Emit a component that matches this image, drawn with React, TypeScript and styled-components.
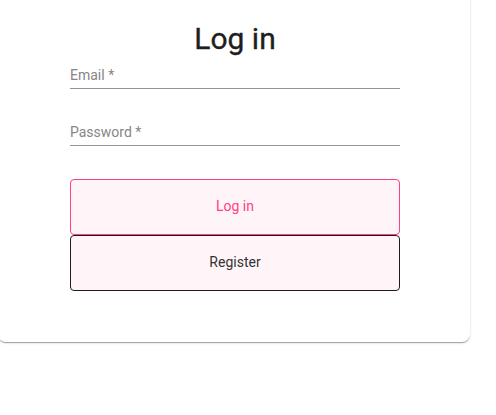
import React from "react";
import styled, { createGlobalStyle } from "styled-components";

const Global = createGlobalStyle`
  html, body { margin: 0; padding: 0; background: #ffffff; }
  body { font-family: Roboto, "Liberation Sans", sans-serif; min-height: 415px; }
  * { box-sizing: border-box; }
`;

const Card = styled.div`
  width: 472px;
  margin: -16px 0 0 -2px;
  padding: 37px 70px 51px 72px;
  background: #ffffff;
  border-radius: 8px;
  box-shadow: 0 2px 1px -1px rgba(0, 0, 0, 0.2), 0 1px 1px 0 rgba(0, 0, 0, 0.14),
    0 1px 3px 0 rgba(0, 0, 0, 0.12);
`;

const Form = styled.form`
  display: flex;
  flex-direction: column;
  width: 330px;
`;

const Title = styled.h1`
  margin: 0;
  font-size: 30px;
  line-height: 36px;
  font-weight: 400;
  color: #1e1e1e;
  text-align: center;
  -webkit-text-stroke: 0.35px #1e1e1e;
`;

const Field = styled.div<{ $gap: number }>`
  position: relative;
  margin-top: ${(p) => p.$gap}px;
  height: 22px;
`;

const Label = styled.label`
  position: absolute;
  left: 0;
  top: 0;
  font-size: 14px;
  line-height: 16px;
  color: #868686;
  pointer-events: none;
`;

const Input = styled.input`
  display: block;
  width: 100%;
  height: 22px;
  border: none;
  border-bottom: 1px solid #949494;
  background: transparent;
  outline: none;
  padding: 0;
  font: inherit;
`;

const Buttons = styled.div`
  display: flex;
  flex-direction: column;
  margin-top: 33px;
`;

const Button = styled.button<{ $variant: "primary" | "secondary" }>`
  height: 56px;
  width: 100%;
  border-radius: 4px;
  background: #fff5f9;
  border: 1px solid ${(p) => (p.$variant === "primary" ? "#ff4081" : "#1c1c1c")};
  color: ${(p) => (p.$variant === "primary" ? "#ff4081" : "#333333")};
  font-family: Roboto, "Liberation Sans", sans-serif;
  font-size: 14px;
  font-weight: 400;
  padding: 0 0 2px;
  cursor: pointer;
`;

export default function App() {
  return (
    <>
      <Global />
      <Card>
        <Form onSubmit={(e) => e.preventDefault()}>
          <Title>Log in</Title>
          <Field $gap={10}>
            <Label htmlFor="email">Email *</Label>
            <Input id="email" type="email" />
          </Field>
          <Field $gap={35}>
            <Label htmlFor="password">Password *</Label>
            <Input id="password" type="password" />
          </Field>
          <Buttons>
            <Button type="submit" $variant="primary">Log in</Button>
            <Button type="button" $variant="secondary">Register</Button>
          </Buttons>
        </Form>
      </Card>
    </>
  );
}
